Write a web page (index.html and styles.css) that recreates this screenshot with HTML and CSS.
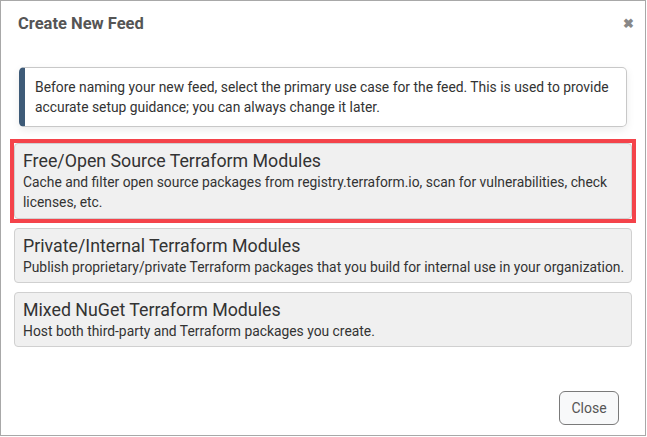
FILE: index.html
```html
<!DOCTYPE html>
<html>
<head>
<meta charset="utf-8">
<link rel="stylesheet" href="styles.css">
</head>
<body>
<div class="modal">
  <div class="modal-header">
    <h1 class="modal-title">Create New Feed</h1>
    <span class="close-x">&#x2716;</span>
  </div>
  <div class="modal-body">
    <div class="info">Before naming your new feed, select the primary use case for the feed. This is used to provide accurate setup guidance; you can always change it later.</div>
    <div class="options">
      <div class="highlight">
        <div class="option">
          <div class="opt-title">Free/Open Source Terraform Modules</div>
          <div class="opt-desc">Cache and filter open source packages from registry.terraform.io, scan for vulnerabilities, check licenses, etc.</div>
        </div>
      </div>
      <div class="option">
        <div class="opt-title">Private/Internal Terraform Modules</div>
        <div class="opt-desc">Publish proprietary/private Terraform packages that you build for internal use in your organization.</div>
      </div>
      <div class="option">
        <div class="opt-title">Mixed NuGet Terraform Modules</div>
        <div class="opt-desc">Host both third-party and Terraform packages you create.</div>
      </div>
    </div>
  </div>
  <div class="modal-footer">
    <button class="btn-close">Close</button>
  </div>
</div>
</body>
</html>
```
FILE: styles.css
```css
html, body {
  margin: 0;
  padding: 0;
  background: #fff;
}
body {
  font-family: Roboto, "Liberation Sans", sans-serif;
  color: #333;
}
.modal {
  width: 646px;
  height: 436px;
  box-sizing: border-box;
  border: 1px solid #a8a8a8;
  display: flex;
  flex-direction: column;
  background: #fff;
}
.modal-header {
  display: flex;
  align-items: center;
  justify-content: space-between;
  padding: 13px 11px 0 17px;
  height: 20px;
}
.modal-title {
  margin: 0;
  font-size: 16.5px;
  font-weight: 700;
  color: #555;
  line-height: 20px;
}
.close-x {
  font-size: 13px;
  font-weight: 700;
  color: #888;
  line-height: 20px;
}
.modal-body {
  flex: 1;
  padding: 0 9px;
}
.info {
  margin: 33px 9px 12px 9px;
  border: 1px solid #c8c8c8;
  border-left: 6px solid #3e5b78;
  border-radius: 5px;
  padding: 9px 10px 9px 10px;
  font-size: 13.85px;
  line-height: 20px;
  color: #333;
  box-shadow: 0 3px 8px rgba(0,0,0,0.08);
}
.options {
  display: flex;
  flex-direction: column;
  gap: 5px;
}
.options > .option {
  margin: 0 4px;
}
.options > .option + .option {
  margin-top: 4px;
}
.highlight {
  border: 4px solid #f4434a;
}
.option {
  background: #f0f0f0;
  border: 1px solid #d0d0d0;
  border-radius: 4px;
  padding: 6px 2px 5px 8px;
}
.opt-title {
  font-size: 17.8px;
  line-height: 22px;
  color: #333;
}
.opt-desc {
  font-size: 13.85px;
  line-height: 20px;
  color: #333;
}
.highlight .option {
  padding-bottom: 6px;
}
.modal-footer {
  display: flex;
  justify-content: flex-end;
  padding: 0 26px 10px 0;
}
.btn-close {
  font-family: Roboto, "Liberation Sans", sans-serif;
  font-size: 14px;
  color: #555;
  background: #f8f9fa;
  border: 1px solid #7a7a7a;
  border-radius: 6px;
  width: 60px;
  height: 34px;
  padding: 0;
}
```
